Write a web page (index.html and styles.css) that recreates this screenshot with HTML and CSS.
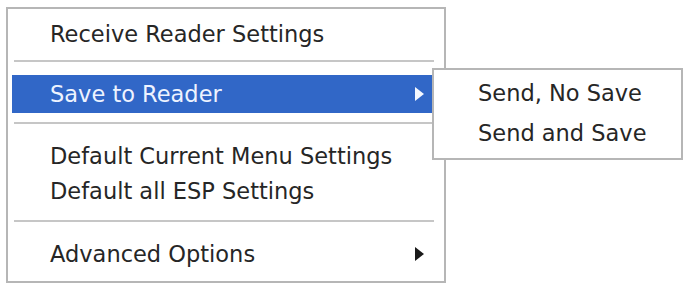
FILE: index.html
```html
<!DOCTYPE html>
<html>
<head>
<meta charset="utf-8">
<link rel="stylesheet" href="styles.css">
</head>
<body>
<div class="menu">
  <div class="item">Receive Reader Settings</div>
  <div class="sep sep-a"><span></span></div>
  <div class="item item-active"><span>Save to Reader</span><i class="arrow"></i></div>
  <div class="sep sep-b"><span></span></div>
  <div class="item">Default Current Menu Settings</div>
  <div class="item">Default all ESP Settings</div>
  <div class="sep sep-c"><span></span></div>
  <div class="item"><span>Advanced Options</span><i class="arrow"></i></div>
</div>
<div class="submenu">
  <div class="sub-item">Send, No Save</div>
  <div class="sub-item">Send and Save</div>
</div>
</body>
</html>
```
FILE: styles.css
```css
html, body {
  margin: 0;
  padding: 0;
  background: #ffffff;
}
body {
  font-family: "DejaVu Sans", sans-serif;
  font-size: 22.5px;
  color: #262626;
  position: relative;
  width: 687px;
  height: 287px;
  overflow: hidden;
}
.menu {
  box-sizing: border-box;
  margin: 7px 0 0 6px;
  width: 440px;
  height: 276px;
  border: 2px solid #b6b6b6;
  padding: 7px 4px 0 4px;
  display: flex;
  flex-direction: column;
}
.item {
  height: 35px;
  display: flex;
  align-items: center;
  justify-content: space-between;
  padding: 0 16px 0 38px;
  white-space: nowrap;
}
.item-active {
  height: 38px;
  background: #3167c7;
  color: #eef3ff;
  margin-right: -4px;
  padding-right: 20px;
}
.arrow {
  width: 0;
  height: 0;
  border-left: 9px solid #1a1a1a;
  border-top: 7px solid transparent;
  border-bottom: 7px solid transparent;
}
.item-active .arrow {
  border-left-color: #f4f8ff;
}
.sep {
  display: flex;
  flex-direction: column;
  padding: 0 6px 0 2px;
}
.sep span {
  display: block;
  height: 2px;
  background: #c6c6c6;
}
.sep-a { height: 24px; padding-top: 9px; box-sizing: border-box; }
.sep-b { height: 25px; padding-top: 9px; box-sizing: border-box; }
.sep-c { height: 28px; padding-top: 12px; box-sizing: border-box; }
.submenu {
  position: absolute;
  left: 432px;
  top: 68px;
  box-sizing: border-box;
  width: 251px;
  height: 92px;
  background: #ffffff;
  border: 2px solid #b6b6b6;
  padding: 3px 0 0 44px;
}
.sub-item {
  height: 40px;
  display: flex;
  align-items: center;
  white-space: nowrap;
}
```
